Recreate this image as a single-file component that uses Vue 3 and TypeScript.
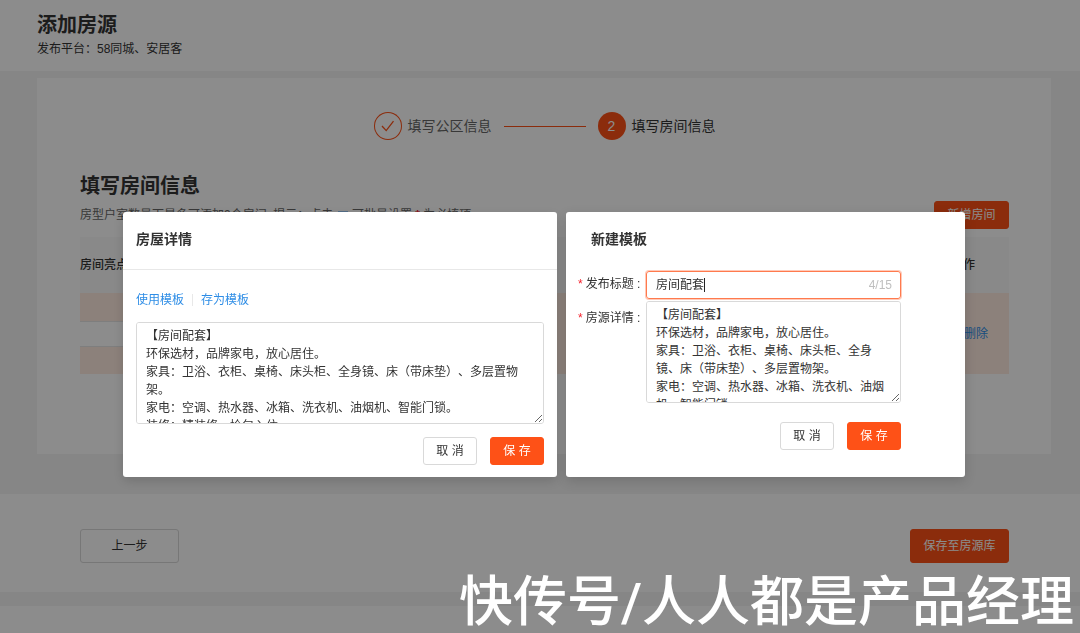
<script setup lang="ts">
import { computed, ref } from 'vue'

const roomHighlight = ref('')
const templateTitle = ref('房间配套')
const maxTitle = 15
const titleCount = computed(() => `${templateTitle.value.length}/${maxTitle}`)

const houseDetail = ref(
  [
    '【房间配套】',
    '环保选材，品牌家电，放心居住。',
    '家具：卫浴、衣柜、桌椅、床头柜、全身镜、床（带床垫）、多层置物架。',
    '家电：空调、热水器、冰箱、洗衣机、油烟机、智能门锁。',
    '装修：精装修，拎包入住。',
  ].join('\n'),
)
const templateDetail = ref(houseDetail.value)
</script>

<template>
  <div class="page">
    <header class="page-header">
      <h1>添加房源</h1>
      <p>发布平台：58同城、安居客</p>
    </header>

    <main class="content">
      <section class="card">
        <ol class="steps">
          <li class="step done">
            <span class="step-icon">
              <svg viewBox="0 0 28 28" width="28" height="28" aria-hidden="true">
                <path d="M8 14l4.2 4.6L19.5 9.2" fill="none" stroke="currentColor" stroke-width="1.3" />
              </svg>
            </span>
            <span>填写公区信息</span>
          </li>
          <li class="step-line" aria-hidden="true"></li>
          <li class="step current">
            <span class="step-icon">2</span>
            <span>填写房间信息</span>
          </li>
        </ol>

        <h2>填写房间信息</h2>
        <div class="hint-row">
          <p class="hint">
            房型户室数量下最多可添加9个房间, 提示：点击
            <svg class="edit" viewBox="0 0 12 12" width="12" height="12" aria-hidden="true">
              <path d="M11 6v5H1V1h10M4 8l5-5" fill="none" stroke="currentColor" />
            </svg>
            可批量设置 <span class="star">*</span> 为必填项
          </p>
          <button type="button" class="btn primary add">新增房间</button>
        </div>

        <table class="rooms">
          <thead>
            <tr>
              <th scope="col">房间亮点</th>
              <th scope="col" class="ops">操作</th>
            </tr>
          </thead>
          <tbody>
            <tr>
              <td><input v-model="roomHighlight" class="room-input" type="text" aria-label="房间亮点" /></td>
              <td class="ops"><a href="#">删除</a></td>
            </tr>
          </tbody>
        </table>
      </section>
    </main>

    <footer class="page-footer">
      <button type="button" class="btn large">上一步</button>
      <button type="button" class="btn primary large">保存至房源库</button>
    </footer>
    <div class="tail"></div>
  </div>

  <div class="overlay">
    <section class="dialog detail" role="dialog" aria-labelledby="detail-title">
      <h3 id="detail-title">房屋详情</h3>
      <div class="detail-body">
        <nav class="links">
          <a href="#">使用模板</a>
          <span class="sep"></span>
          <a href="#">存为模板</a>
        </nav>
        <textarea v-model="houseDetail" aria-labelledby="detail-title"></textarea>
        <div class="actions">
          <button type="button" class="btn">取 消</button>
          <button type="button" class="btn primary">保 存</button>
        </div>
      </div>
    </section>

    <section class="dialog template" role="dialog" aria-labelledby="template-title">
      <h3 id="template-title">新建模板</h3>
      <form class="form" @submit.prevent>
        <label for="tpl-title"><span class="star">*</span>发布标题 :</label>
        <div class="field">
          <input id="tpl-title" v-model="templateTitle" type="text" :maxlength="maxTitle" />
          <span class="caret"></span>
          <span class="count">{{ titleCount }}</span>
        </div>
        <label for="tpl-detail"><span class="star">*</span>房源详情 :</label>
        <textarea id="tpl-detail" v-model="templateDetail"></textarea>
        <div class="actions">
          <button type="button" class="btn">取 消</button>
          <button type="submit" class="btn primary">保 存</button>
        </div>
      </form>
    </section>
  </div>

  <div class="watermark">快传号/人人都是产品经理</div>
</template>

<style>
body {
  margin: 0;
  background: #fff;
}

#app {
  font-family: 'Liberation Sans', 'Noto Sans CJK SC', sans-serif;
  font-size: 12px;
  line-height: 18px;
  color: #333;
  text-spacing-trim: space-all;
}
</style>

<style scoped>
* {
  box-sizing: border-box;
}

h1,
h2,
h3,
p,
ol {
  margin: 0;
  padding: 0;
}

button,
input,
textarea {
  font: inherit;
  color: inherit;
  text-spacing-trim: inherit;
}

a {
  color: #2e8de6;
  text-decoration: none;
}

.star {
  color: #f5222d;
}

.page {
  display: flex;
  flex-direction: column;
  min-height: 100vh;
  background: #f4f4f4;
}

.page-header {
  padding: 11px 37px 12px;
  background: #fff;
}

h1,
h2 {
  font-size: 20px;
  line-height: 28px;
  font-weight: 700;
}

.page-header p {
  line-height: 20px;
}

.content {
  padding: 7px 29px 40px 37px;
}

.card {
  padding: 34px 42px 80px 43px;
  background: #fff;
}

.steps {
  display: flex;
  align-items: center;
  justify-content: center;
  gap: 12px;
  list-style: none;
  font-size: 14px;
  line-height: 28px;
}

.step {
  display: flex;
  gap: 6px;
}

.step.done {
  color: #666;
}

.step-icon {
  display: flex;
  justify-content: center;
  width: 28px;
  height: 28px;
  border-radius: 50%;
}

.done .step-icon {
  color: #fe5117;
  box-shadow: inset 0 0 0 1px #fe5117;
}

.current .step-icon {
  color: #fff;
  background: #fe5117;
}

.step-line {
  width: 82px;
  border-top: 1px solid #fe5117;
}

h2 {
  margin-top: 32px;
}

.hint-row {
  display: flex;
  align-items: center;
  justify-content: space-between;
  margin-top: 1px;
}

.hint {
  color: #666;
}

.hint .star {
  font-weight: 700;
}

.edit {
  color: #2e8de6;
  vertical-align: -4px;
}

.btn {
  min-width: 54px;
  height: 28px;
  padding: 0 12px;
  border: 1px solid #d9d9d9;
  border-radius: 3px;
  background: #fff;
}

.btn.primary {
  border-color: #fe5117;
  background: #fe5117;
  color: #fff;
}

.btn.add {
  min-width: 75px;
}

.btn.large {
  min-width: 99px;
  height: 34px;
}

.rooms {
  width: 100%;
  margin-top: 8px;
  border-collapse: collapse;
  text-align: left;
}

.rooms th {
  height: 56px;
  padding: 0;
  font-weight: 500;
  background: #fafafa;
}

.rooms td {
  height: 81px;
  padding: 0;
  background: #ffebe0;
}

.rooms .ops {
  width: 92px;
  padding-right: 34px;
  text-align: right;
}

.rooms td.ops {
  padding-right: 21px;
}

.room-input {
  display: block;
  width: 50%;
  height: 26px;
  border: 1px solid #e6e6e6;
  border-left: 0;
  background: #fff;
}

.page-footer {
  display: flex;
  align-items: center;
  justify-content: space-between;
  padding: 35px 71px 29px 80px;
  background: #fff;
}

.tail {
  flex: 1;
  margin-top: 14px;
  background: #fff;
}

/* dialogs sit over the dimmed page */
.overlay {
  position: fixed;
  inset: 0;
  display: flex;
  align-items: center;
  justify-content: center;
  gap: 9px;
  padding: 56px 115px 0 123px;
  background: rgba(0, 0, 0, 0.45);
}

.dialog {
  align-self: center;
  min-height: 265px;
  border-radius: 3px;
  background: #fff;
  box-shadow: 0 4px 12px rgba(0, 0, 0, 0.15);
}

h3 {
  font-size: 14px;
  line-height: 22px;
  font-weight: 700;
}

.detail {
  flex: 434;
}

.template {
  flex: 399;
}

.detail h3 {
  padding: 16px 13px 19px;
  border-bottom: 1px solid #e8e8e8;
}

.detail-body {
  padding: 21px 13px 12px;
}

.links {
  display: flex;
  align-items: center;
  gap: 8px;
}

.sep {
  width: 1px;
  height: 12px;
  background: #e8e8e8;
}

textarea {
  display: block;
  width: 100%;
  height: 102px;
  padding: 4px 9px;
  border: 1px solid #d9d9d9;
  border-radius: 3px;
  background: #fff;
  outline: 0;
  scrollbar-width: none;
}

.detail textarea {
  margin-top: 13px;
}

.actions {
  display: flex;
  justify-content: flex-end;
  gap: 13px;
  margin-top: 13px;
}

.template h3 {
  padding: 16px 25px 0;
}

.form {
  display: grid;
  grid-template-columns: 68px 1fr;
  row-gap: 2px;
  padding: 21px 64px 26px 12px;
}

.form label {
  line-height: 26px;
  white-space: nowrap;
}

.form label .star {
  margin-right: 3px;
}

.form label[for='tpl-detail'] {
  line-height: 34px;
}

.field {
  display: flex;
  align-items: center;
  height: 28px;
  padding: 0 8px 0 9px;
  border: 1px solid #ff7a4d;
  border-radius: 3px;
  box-shadow: 0 0 0 1px rgba(254, 81, 23, 0.3);
}

.field input {
  field-sizing: content;
  padding: 0;
  border: 0;
  outline: 0;
  background: none;
}

.caret {
  width: 1px;
  height: 14px;
  background: #222;
}

.count {
  margin-left: auto;
  color: #bfbfbf;
}

.form .actions {
  grid-column: 1 / -1;
  margin-top: 17px;
}

.watermark {
  position: fixed;
  right: 6px;
  bottom: 0;
  font-family: Roboto, 'Noto Sans CJK SC', sans-serif;
  font-size: 54px;
  font-weight: 500;
  line-height: 60px;
  color: #fff;
  white-space: nowrap;
}
</style>
